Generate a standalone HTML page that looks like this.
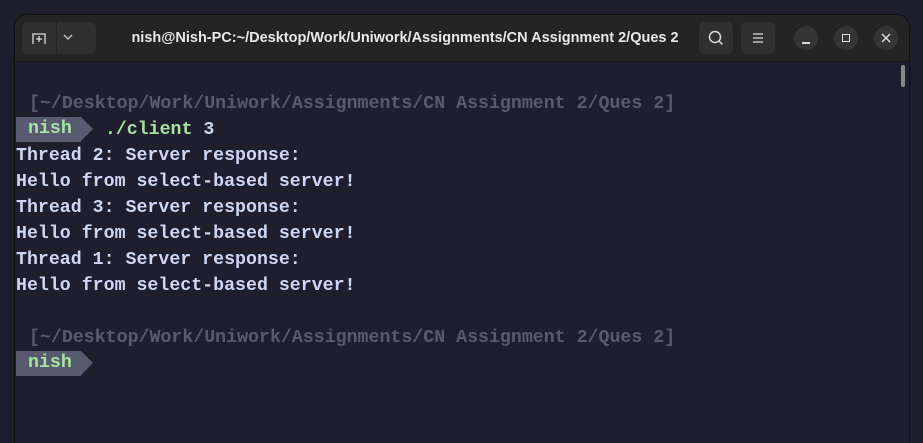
<!DOCTYPE html>
<html><head><style>
html,body{margin:0;padding:0;background:#1d1d2c;width:923px;height:443px;overflow:hidden}
.win{position:absolute;left:15px;top:15px;width:894px;height:428px;background:#1e1e2e;border-radius:12px 12px 0 0;overflow:hidden;box-shadow:0 0 0 1px #111}
.hdr{position:absolute;left:0;top:0;width:894px;height:46px;background:#242424;border-bottom:1px solid #1a1a1a}
.title{position:absolute;left:0;width:780px;top:15px;text-align:center;font:bold 14.5px "Liberation Sans",sans-serif;color:#e8e8e8;white-space:nowrap}
.btn{position:absolute;top:7px;height:32px;background:#303030;border-radius:6px}
.cb{position:absolute;top:11px;width:24px;height:24px;border-radius:50%;background:#353535}
.t{position:absolute;left:0;top:76px;font:bold 18.25px/26px "Liberation Mono",monospace;color:#cdd6f4}
.l{height:26px;padding-left:1px;white-space:pre}
.p{color:#585b70;padding-left:14px}
.g{color:#a6e3a1;margin-left:24px}
.pr{display:inline-block;background:#585b70;color:#a6e3a1;height:25px;line-height:25px;padding:0 9px 0 12px;position:relative;vertical-align:top;margin-top:0}
.pr:after{content:"";position:absolute;right:-12px;top:0;border-left:12px solid #585b70;border-top:12.5px solid transparent;border-bottom:12.5px solid transparent}
</style></head><body>
<div class="win">
<div class="hdr">
<div class="btn" style="left:7px;width:74px"></div>
<div style="position:absolute;left:41px;top:7px;width:1px;height:32px;background:#242424"></div>
<svg style="position:absolute;left:16px;top:15px" width="16" height="16" viewBox="0 0 16 16" fill="none" stroke="#ddd" stroke-width="1.3"><path d="M2 14V4h12v10"/><path d="M8 6v6M5 9h6"/></svg>
<svg style="position:absolute;left:47px;top:17px" width="12" height="10" viewBox="0 0 12 10" fill="none" stroke="#ccc" stroke-width="1.3"><path d="M2 3l4 4 4-4"/></svg>
<div class="title">nish@Nish-PC:~/Desktop/Work/Uniwork/Assignments/CN Assignment 2/Ques 2</div>
<div class="btn" style="left:684px;width:34px"></div>
<svg style="position:absolute;left:692px;top:14px" width="18" height="18" viewBox="0 0 18 18" fill="none" stroke="#ddd" stroke-width="1.5"><circle cx="8" cy="8" r="5.5"/><path d="M12 12l3.5 3.5"/></svg>
<div class="btn" style="left:726px;width:34px"></div>
<svg style="position:absolute;left:736px;top:16px" width="14" height="14" viewBox="0 0 14 14" stroke="#ddd" stroke-width="1.3"><path d="M2 3h10M2 7h10M2 11h10"/></svg>
<div class="cb" style="left:779px"></div>
<div style="position:absolute;left:787px;top:27px;width:8px;height:1.5px;background:#ddd"></div>
<div class="cb" style="left:819px"></div>
<div style="position:absolute;left:827px;top:19px;width:6px;height:6px;border:1.4px solid #ddd"></div>
<div class="cb" style="left:859px"></div>
<svg style="position:absolute;left:866px;top:18px" width="10" height="10" viewBox="0 0 10 10" stroke="#ddd" stroke-width="1.5"><path d="M1 1l8 8M9 1l-8 8"/></svg>
</div>
<div style="position:absolute;left:886px;top:50px;width:4px;height:22px;border-radius:2px;background:#888"></div>
<div class="t">
<div class="l p">[~/Desktop/Work/Uniwork/Assignments/CN Assignment 2/Ques 2]</div>
<div class="l"><span class="pr">nish</span><span class="g">./client</span> 3</div>
<div class="l">Thread 2: Server response:</div>
<div class="l">Hello from select-based server!</div>
<div class="l">Thread 3: Server response:</div>
<div class="l">Hello from select-based server!</div>
<div class="l">Thread 1: Server response:</div>
<div class="l">Hello from select-based server!</div>
<div class="l"> </div>
<div class="l p">[~/Desktop/Work/Uniwork/Assignments/CN Assignment 2/Ques 2]</div>
<div class="l"><span class="pr">nish</span></div>
</div>
</div>
</body></html>
